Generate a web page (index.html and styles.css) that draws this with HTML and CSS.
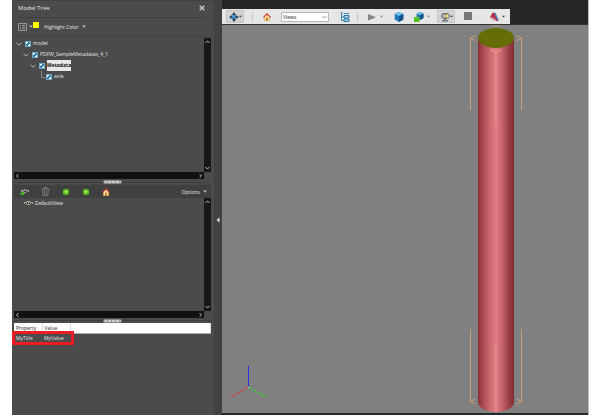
FILE: index.html
```
<!DOCTYPE html>
<html lang="en">
<head>
<meta charset="utf-8">
<title>Model Tree</title>
<link rel="stylesheet" href="styles.css">
</head>
<body>
<svg class="defs" aria-hidden="true">
  <symbol id="chev" viewBox="0 0 6 4"><path d="M.5.7 3 3.2 5.5.7" fill="none" stroke="currentColor"/></symbol>
  <symbol id="down" viewBox="0 0 4 3"><path d="M0 .5h4L2 2.7z" fill="currentColor"/></symbol>
  <symbol id="house" viewBox="0 0 8 8"><path d="M1.3 4v3.700h5.400V4L4 1.500z" fill="#ffe9a8" stroke="#b98a2c" stroke-width=".5"/><path d="M.4 4.300 4 .8l3.600 3.500" fill="none" stroke="#c8352a" stroke-width="1.100"/><path d="M3.200 4.600h1.600v3H3.200z" fill="#c9541f"/></symbol>
  <symbol id="cube" viewBox="0 0 10 10"><path d="M5 0 9.300 2v5.600L5 10 .7 7.600V2z" fill="#2479b9"/><path d="M5 0 9.300 2 5 4 .7 2z" fill="#6fc0ee"/><path d="M5 4 9.300 2v5.600L5 10z" fill="#145083"/></symbol>
  <symbol id="view" viewBox="0 0 9 6"><path d="M0 2h3V1h3v1h3v2H6v1H3V4H0z" fill="#aaaaa0"/><path d="M3 2h3v2H3zM1 3h1v1H1zM7 3h1v1H7z" fill="#3c3c38"/><path d="M4 2h1v1H4z" fill="#e8d98a"/></symbol>
  <symbol id="ball" viewBox="0 0 8 8"><circle cx="4" cy="4" r="3.200" fill="#55b816"/><circle cx="4" cy="3.700" r="1.300" fill="#c8f595"/></symbol>
</svg>
<div class="app">
  <aside class="panel">
    <header class="title">
      <h1>Model Tree</h1>
      <button class="close" aria-label="Close"><svg viewBox="0 0 6 6"><path d="M.7.7l4.600 4.600M5.300.7.7 5.300" stroke="#ccc" stroke-width="1.300"/></svg></button>
    </header>
    <div class="highlight">
      <button class="options-btn" aria-label="Tree options"><svg class="list" viewBox="0 0 9 8"><path d="M.5.5h8v7h-8z" fill="none" stroke="#aaa" stroke-width=".8"/><path d="M2 2.300h1M4 2.300h3M2 4h1M4 4h3M2 5.700h1M4 5.700h3" stroke="#aaa" stroke-width=".8"/></svg><svg class="down"><use href="#down"/></svg></button>
      <span class="swatch"></span>
      <button class="color-btn">Highlight Color <svg class="down"><use href="#down"/></svg></button>
    </div>
    <section class="pane">
      <ul class="tree">
        <li><svg class="chev"><use href="#chev"/></svg><label><input type="checkbox" checked><span>model</span></label>
          <ul>
            <li><svg class="chev"><use href="#chev"/></svg><label><input type="checkbox" checked><span>PDFW_SampleMetadatas_4_1</span></label>
              <ul>
                <li><svg class="chev"><use href="#chev"/></svg><label><input type="checkbox" checked><span class="selected">Metadata</span></label>
                  <ul>
                    <li class="leaf"><label><input type="checkbox" checked><span>axle</span></label></li>
                  </ul>
                </li>
              </ul>
            </li>
          </ul>
        </li>
      </ul>
      <div class="vbar"><svg class="up"><use href="#chev"/></svg><svg class="chev"><use href="#chev"/></svg></div>
      <div class="hbar"><svg class="left"><use href="#chev"/></svg><svg class="right"><use href="#chev"/></svg></div>
    </section>
    <div class="divider"><span class="grip"></span></div>
    <div class="viewbar">
      <button aria-label="Add view"><svg viewBox="0 0 9 9"><use href="#view" x="1" y="1" width="8" height="6"/><path d="M0 6h2V4l3 2.500L2 9V7.500H0z" fill="#48bd22"/></svg></button>
      <button aria-label="Delete view"><svg viewBox="0 0 8 9"><path d="M0 2h8M2.700 2V.5h2.600V2M1.200 2.300l.4 6.200h4.800l.4-6.200M3 3.500v4M5 3.500v4" fill="none" stroke="#858585" stroke-width=".8"/></svg></button>
      <button aria-label="Previous view"><svg><use href="#ball"/></svg></button>
      <button aria-label="Next view"><svg><use href="#ball"/></svg></button>
      <button aria-label="Default view"><svg><use href="#house"/></svg></button>
      <button class="options">Options <svg class="down"><use href="#down"/></svg></button>
    </div>
    <section class="pane">
      <ul class="views"><li><svg><use href="#view"/></svg>DefaultView</li></ul>
      <div class="vbar"><svg class="up"><use href="#chev"/></svg><svg class="chev"><use href="#chev"/></svg></div>
      <div class="hbar"><svg class="left"><use href="#chev"/></svg><svg class="right"><use href="#chev"/></svg></div>
    </section>
    <div class="divider"><span class="grip"></span></div>
    <section class="props">
      <table>
        <thead><tr><th>Property</th><th>Value</th><th></th></tr></thead>
        <tbody><tr><td>MyTitle</td><td>MyValue</td><td></td></tr></tbody>
      </table>
      <div class="marker"></div>
    </section>
  </aside>
  <button class="splitter" aria-label="Collapse panel"><svg viewBox="0 0 4 6"><path d="M3.500.5v5L.5 3z" fill="#ddd"/></svg></button>
  <main class="stage">
    <div class="topbar">
      <div class="tools">
        <button class="tool pressed nav" aria-label="Navigate"><svg viewBox="0 0 12 12"><path d="M6 0l2.500 3.500h-5zM6 12l2.500-3.500h-5zM0 6l3.500-2.500v5zM12 6 8.500 3.500v5z" fill="#24384c"/><path d="M6 2l1.600 2.400L10 6 7.600 7.600 6 10 4.400 7.600 2 6l2.400-1.600z" fill="#2675ae"/><circle cx="6" cy="6" r="2.400" fill="#2675ae"/><circle cx="5.500" cy="5.300" r="1.100" fill="#6db7e3"/></svg><svg class="down"><use href="#down"/></svg></button>
        <span class="sep wide"></span>
        <button class="tool home" aria-label="Home"><svg><use href="#house"/></svg></button>
        <span class="picker"><select aria-label="Views"><option>Views</option></select><svg class="chev"><use href="#chev"/></svg></span>
        <button class="tool tree-tool" aria-label="Toggle model tree"><svg viewBox="0 0 10 10"><path d="M.5 1H3M4 1.500h5M1.500 1v7.500H4M1.500 5H4" fill="none" stroke="#3986b5"/><path d="M4 3.500h5v2.500H4zM4 7h5v2.500H4z" fill="#a8d4ec" stroke="#2d76a6"/></svg></button>
        <span class="sep"></span>
        <button class="tool" aria-label="Play"><svg viewBox="0 0 10 10"><path d="M1 2 9 5.200 1 8.500z" fill="#858585"/></svg><svg class="down"><use href="#down"/></svg></button>
        <button class="tool solo" aria-label="Projection"><svg><use href="#cube"/></svg></button>
        <button class="tool" aria-label="Render mode"><svg viewBox="0 0 10 10"><use href="#cube" x="2" y="0" width="8" height="8"/><path d="M0 5h5.500v5H0z" fill="#56c322"/></svg><svg class="down"><use href="#down"/></svg></button>
        <button class="tool pressed" aria-label="Lighting"><svg viewBox="0 0 10 10"><path d="M1 3.500 3 1h5l2 2.500-1 3L6 7v1h2v1.500H2V8h2V7L1.500 6z" fill="#777"/><circle cx="4" cy="4" r="1.500" fill="#c4c4c4"/><circle cx="7" cy="4" r="1.800" fill="#f3dc82"/></svg><svg class="down"><use href="#down"/></svg></button>
        <button class="tool faint" aria-label="Background color"><svg viewBox="0 0 10 10"><path d="M1 0h8v8H1z" fill="#777"/></svg><svg class="down"><use href="#down"/></svg></button>
        <button class="tool dark" aria-label="Cross section"><svg viewBox="0 0 10 10"><path d="M.8 5.500 3.500.8 6 .8 9.300 8 8 9.500 5 6.500z" fill="#b9304a"/><path d="M5 1 6.500.8 9.800 8 8.700 9z" fill="#4290c4"/><path d="M.8 5.500l2.200 0L7 9 5 9z" fill="#d8a0aa"/></svg><svg class="down"><use href="#down"/></svg></button>
      </div>
    </div>
    <svg class="scene" viewBox="222 25 366 388" role="img" aria-label="Axle model">
      <defs>
        <linearGradient id="rod">
          <stop offset="0" stop-color="#883036"/><stop offset=".12" stop-color="#a5474d"/><stop offset=".35" stop-color="#cf6b74"/><stop offset=".5" stop-color="#df7d88"/><stop offset=".65" stop-color="#ca6670"/><stop offset=".88" stop-color="#963c42"/><stop offset="1" stop-color="#812a2f"/>
        </linearGradient>
      </defs>
      <path d="M478 38V402A18 10 0 0 0 514 402V38z" fill="url(#rod)"/>
      <ellipse cx="496" cy="38" rx="18" ry="10" fill="#666c06"/>
      <g fill="none" stroke="#c99f76">
        <path d="M470.500 110V38l5 2.500M470.500 38l5-2.500M521.500 110V38l-5 2.500M521.500 38l-5-2.500"/>
        <path d="M470.500 329v72.500l5-2.500M470.500 401.500l5 2.500M521.500 329v72.500l-5-2.500M521.500 401.500l-5 2.500"/>
        <path d="M491 26.500l2-1M501 26.500l-2-1M496 25v2"/>
      </g>
      <path d="M491 49.500l5 3 5-3M496 52v73M496 343.500V412" fill="none" stroke="#ea917f" stroke-width="1.500"/>
      <path d="M248.500 387V366" stroke="#2f2fe0"/>
      <path d="M248.500 387 230 397.500" stroke="#d34242" stroke-width="1.200" stroke-dasharray="4 1"/>
      <path d="M248.500 387 267 397.500" stroke="#35c835" stroke-width="1.200" stroke-dasharray="4 1"/>
      <path d="M248 387.500h1" stroke="#ddd"/>
    </svg>
  </main>
</div>
</body>
</html>
```
FILE: styles.css
```
* { box-sizing: border-box; }
body { margin: 0; background: #fff; font: 5px/8px "Open Sans", "Noto Sans", sans-serif; color: #e6e6e6; }
button { display: inline-flex; align-items: center; margin: 0; padding: 0; border: 0; background: none; font: inherit; color: inherit; }
ul { list-style: none; margin: 0; padding: 0; }
svg { display: block; flex: none; }
.defs { position: absolute; width: 0; height: 0; }
.down { width: 4px; height: 3px; color: #bbb; }
.chev { width: 6px; height: 4px; color: #bbb; }

.app { display: grid; grid-template-columns: 202px 8px 1fr; height: 100vh; margin: 0 11px 0 12px; }
.panel { display: grid; grid-template-rows: 17px 19px 142fr 6px 13px 120fr 5px 92fr; min-width: 0; padding: 0 3px 0 2px; background: #4b4b4b; border-top: 1px solid #424242; }

.title { display: flex; align-items: center; justify-content: space-between; margin: 0 4px; padding: 0 2px 2px 0; border-bottom: 1px solid #3f3f3f; }
.title h1 { margin: 0; font-size: 6px; font-weight: 400; line-height: 10px; }
.close svg { width: 6px; height: 6px; }

.highlight { display: flex; align-items: center; margin: 0 4px; padding-bottom: 1px; border-bottom: 1px solid #404040; }
.options-btn { gap: 2px; }
.options-btn .list { width: 9px; height: 8px; }
.swatch { width: 6px; height: 6px; margin: 0 5px 3px 0; background: #ff0; }
.color-btn { gap: 3px; }

.pane { display: grid; grid-template: 1fr 7px / 1fr 7px; padding: 1px 0 0; min-height: 0; }
.vbar { display: flex; flex-direction: column; justify-content: space-between; align-items: center; padding: 2px 0; background: #171717; }
.vbar svg, .hbar svg { width: 5px; height: 4px; color: #ddd; }
.up { transform: rotate(180deg); }
.hbar { display: flex; justify-content: space-between; align-items: center; padding: 0 1px; background: #111; }
.left { transform: rotate(90deg); }
.right { transform: rotate(-90deg); }

.tree { padding: 0 0 0 2px; }
.tree ul { margin-left: 7px; }
.tree li { display: grid; grid-template-columns: 9px 1fr; align-items: center; line-height: 11px; }
.tree li > ul { grid-column: 1 / -1; }
.tree .leaf::before { content: ""; align-self: start; width: 5px; height: 6px; margin-left: 4px; border: solid #888; border-width: 0 0 1px 1px; }
.tree label { display: flex; align-items: center; gap: 2px; }
.tree input { appearance: none; width: 6px; height: 6px; margin: 0; background: #e6f4fc; border: 1px solid #72a9c8; }
.tree input:checked { background: linear-gradient(135deg, #fff 30%, #3783b0 30% 65%, #fff 65%); }
.selected { background: #e8e8e8; color: #111; font-weight: 700; }

.divider { display: flex; align-items: center; justify-content: center; background: linear-gradient(#3e3e3e, #3e3e3e) center / 100% 1px no-repeat; }
.grip { width: 19px; height: 4px; border: 1px solid #888; border-radius: 2px; background: repeating-linear-gradient(90deg, #ccc 0 3px, #999 3px 4px); }

.viewbar { display: flex; align-items: center; gap: 12px; padding: 0 4px 0 6px; background: #404040; }
.viewbar button svg:not(.down) { width: 9px; height: 9px; }
.viewbar button:nth-child(n+3) svg:not(.down) { width: 8px; height: 8px; }
.viewbar .options { gap: 3px; margin-left: auto; }
.viewbar + .pane { padding: 0; }
.views li { display: flex; align-items: center; gap: 2px; padding: 1px 10px; }
.views svg { width: 9px; height: 6px; }

.props { position: relative; }
.props table { width: 100%; border-collapse: collapse; table-layout: fixed; }
.props th, .props td { padding: 1px 2px; line-height: 8px; font-weight: 400; text-align: left; }
.props td { padding-top: 0; }
.props th { background: #fff; color: #222; border-right: 1px solid #ddd; border-bottom: 1px solid #aaa; }
.props th:nth-child(-n+2) { width: 28px; }
.marker { position: absolute; left: -2px; top: 8px; width: 62px; height: 14px; border: 3px solid #ed1c24; }

.splitter { justify-content: center; padding-top: 24px; background: #424242; }
.splitter svg { width: 4px; height: 6px; }

.stage { display: flex; flex-direction: column; min-width: 0; background: #808080; border-right: 1px solid #bbb; }
.topbar { padding-top: 9px; background: #262626; border-bottom: 1px solid #333; }
.tools { display: flex; align-items: center; gap: 5px; width: max-content; height: 15px; padding: 0 3px 0 4px; background: #e6e6e6; }
.tool { justify-content: space-between; width: 21px; height: 13px; padding: 0 2px 0 3px; }
.tool svg { width: 10px; height: 10px; }
.tool .down { width: 3px; height: 3px; color: #888; }
.tool.pressed { width: 18px; padding: 0 1px 0 2px; background: #d3d3d3; border: 1px solid #c5c5c5; }
.tool.pressed .down, .tool.dark .down { color: #444; }
.tool.faint .down { color: #ccc; }
.tool.solo, .tool.tree-tool { justify-content: center; width: 16px; }
.tool.home { justify-content: center; width: 14px; padding: 0; }
.tool.home svg { width: 8px; height: 8px; }
.sep { width: 2px; height: 10px; border-left: 1px solid #c8c8c8; }
.sep.wide { width: 6px; border: 0; background: linear-gradient(#c8c8c8, #c8c8c8) center / 1px 100% no-repeat; }
.picker { display: grid; align-items: center; margin: 0 2px; }
.picker > * { grid-area: 1 / 1; }
.picker .chev { justify-self: end; width: 5px; height: 4px; margin-right: 2px; color: #888; pointer-events: none; }
select { appearance: none; width: 48px; height: 10px; margin: 0; padding: 0 1px; border: 1px solid #b8b8b8; border-radius: 0; font: inherit; color: #222; background: #fff; }
.scene { flex: 1; min-height: 0; width: 100%; border-bottom: 2px solid #292727; }
```
